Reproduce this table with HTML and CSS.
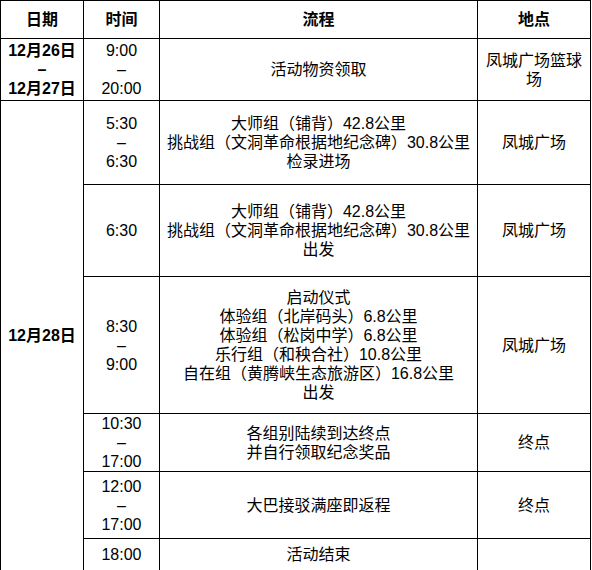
FILE: index.html
```html
<!DOCTYPE html>
<html lang="zh-CN">
<head>
<meta charset="utf-8">
<title>活动流程</title>
<link rel="stylesheet" href="styles.css">
</head>
<body>
<table class="schedule">
  <colgroup>
    <col class="c-date">
    <col class="c-time">
    <col class="c-flow">
    <col class="c-place">
  </colgroup>
  <thead>
    <tr class="r-head">
      <th>日期</th>
      <th>时间</th>
      <th>流程</th>
      <th>地点</th>
    </tr>
  </thead>
  <tbody>
    <tr class="r1">
      <td class="date">12月26日<br>–<br>12月27日</td>
      <td>9:00<br>–<br>20:00</td>
      <td>活动物资领取</td>
      <td>凤城广场篮球场</td>
    </tr>
    <tr class="r2">
      <td class="date" rowspan="7">12月28日</td>
      <td>5:30<br>–<br>6:30</td>
      <td>大师组（铺背）42.8公里<br>挑战组（文洞革命根据地纪念碑）30.8公里<br>检录进场</td>
      <td>凤城广场</td>
    </tr>
    <tr class="r3">
      <td>6:30</td>
      <td>大师组（铺背）42.8公里<br>挑战组（文洞革命根据地纪念碑）30.8公里<br>出发</td>
      <td>凤城广场</td>
    </tr>
    <tr class="r4">
      <td>8:30<br>–<br>9:00</td>
      <td>启动仪式<br>体验组（北岸码头）6.8公里<br>体验组（松岗中学）6.8公里<br>乐行组（和秧合社）10.8公里<br>自在组（黄腾峡生态旅游区）16.8公里<br>出发</td>
      <td>凤城广场</td>
    </tr>
    <tr class="r5">
      <td>10:30<br>–<br>17:00</td>
      <td>各组别陆续到达终点<br>并自行领取纪念奖品</td>
      <td>终点</td>
    </tr>
    <tr class="r6">
      <td>12:00<br>–<br>17:00</td>
      <td>大巴接驳满座即返程</td>
      <td>终点</td>
    </tr>
    <tr class="r7">
      <td>18:00</td>
      <td>活动结束</td>
      <td></td>
    </tr>
  </tbody>
</table>
</body>
</html>
```

FILE: styles.css
```css
html, body {
  margin: 0;
  padding: 0;
  background: #ffffff;
}

.schedule {
  border-collapse: collapse;
  table-layout: fixed;
  width: 591px;
  font-family: "Liberation Sans", "Noto Sans CJK SC", sans-serif;
  font-size: 16px;
  line-height: 19px;
  color: #000000;
}

.c-date { width: 83px; }
.c-time { width: 76px; }
.c-flow { width: 318px; }
.c-place { width: 113px; }

.schedule th,
.schedule td {
  border: 1px solid #000000;
  padding: 0 4px;
  text-align: center;
  vertical-align: middle;
  font-weight: normal;
}

.schedule th,
.schedule td.date {
  font-weight: bold;
}

.r-head { height: 38px; }
.r1 { height: 62px; }
.r2 { height: 84px; }
.r3 { height: 92px; }
.r4 { height: 137px; }
.r5 { height: 57px; }
.r6 { height: 67px; }
.r7 { height: 32px; }
```
